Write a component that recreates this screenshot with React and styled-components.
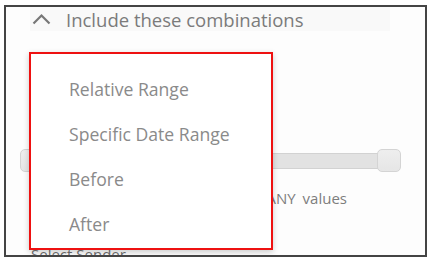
import React from 'react'
import styled, { createGlobalStyle } from 'styled-components'

const GlobalStyle = createGlobalStyle`
  body {
    margin: 0;
    background: #ffffff;
    font-family: 'Open Sans', 'Liberation Sans', sans-serif;
  }
`

const Frame = styled.div`
  position: relative;
  box-sizing: border-box;
  margin: 5px 0 0 4px;
  width: 423px;
  height: 252px;
  border: 2px solid #444;
  background: #fdfdfd;
  overflow: hidden;
`

const Header = styled.div`
  display: flex;
  align-items: center;
  gap: 15px;
  margin-left: 24px;
  padding-left: 2px;
  width: 358px;
  height: 24px;
  background: #f9f9f9;
  color: #7b7b7b;
  font-size: 18.5px;
`

const Slider = styled.div`
  position: relative;
  display: flex;
  justify-content: space-between;
  align-items: center;
  margin: 118px 0 0 14px;
  width: 381px;
  height: 23px;
  &::before {
    content: '';
    position: absolute;
    left: 0;
    right: 0;
    top: 4px;
    height: 16px;
    box-sizing: border-box;
    background: #e2e2e2;
    border: 1px solid #d2d2d2;
    border-radius: 4px;
  }
`

const Thumb = styled.div`
  position: relative;
  box-sizing: border-box;
  width: 24px;
  height: 23px;
  background: linear-gradient(#eeeeee, #e6e6e6);
  border: 1px solid #d4d4d4;
  border-radius: 5px;
`

const ValuesLine = styled.div`
  margin-top: 16px;
  padding-right: 78px;
  text-align: right;
  color: #7d7d7d;
  font-size: 15px;
  line-height: 20px;
  word-spacing: 3px;
`

const SectionLabel = styled.div`
  margin: 36px 0 0 25px;
  color: #6f6f6f;
  font-size: 15px;
  line-height: 20px;
`

const Menu = styled.ul`
  position: absolute;
  left: 23px;
  top: 45px;
  box-sizing: border-box;
  width: 244px;
  height: 198px;
  margin: 0;
  padding: 12px 0;
  list-style: none;
  background: #ffffff;
  border: 2px solid #ee1111;
  box-shadow: 0 2px 6px rgba(0, 0, 0, 0.2);
`

const MenuItem = styled.li`
  display: flex;
  align-items: center;
  height: 45px;
  padding-left: 38px;
  color: #8a8a8a;
  font-size: 17.6px;
`

const options = ['Relative Range', 'Specific Date Range', 'Before', 'After']

export default function App() {
  return (
    <>
      <GlobalStyle />
      <Frame>
        <Header>
          <svg width="19" height="12" viewBox="0 0 19 12">
            <polyline points="1.5,10.5 9.5,2.5 17.5,10.5" fill="none" stroke="#777" strokeWidth="2.2" />
          </svg>
          <span>Include these combinations</span>
        </Header>
        <Slider>
          <Thumb />
          <Thumb />
        </Slider>
        <ValuesLine>Include results with ANY values</ValuesLine>
        <SectionLabel>Select Sender</SectionLabel>
        <Menu>
          {options.map((o) => (
            <MenuItem key={o}>{o}</MenuItem>
          ))}
        </Menu>
      </Frame>
    </>
  )
}
